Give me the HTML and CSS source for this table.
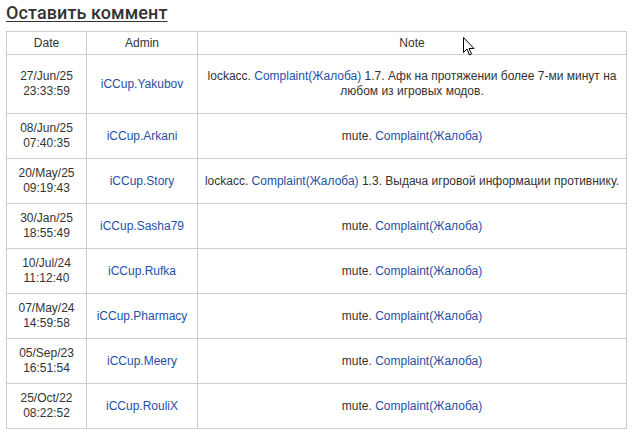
FILE: index.html
```html
<!DOCTYPE html>
<html>
<head>
<meta charset="utf-8">
<link rel="stylesheet" href="styles.css">
</head>
<body>
<a class="title" href="#">Оставить коммент</a>
<table class="log">
  <colgroup><col class="c-date"><col class="c-admin"><col></colgroup>
  <thead>
    <tr><th>Date</th><th>Admin</th><th>Note</th></tr>
  </thead>
  <tbody>
    <tr class="tall"><td>27/Jun/25<br>23:33:59</td><td><a href="#">iCCup.Yakubov</a></td><td>lockacc. <a href="#">Complaint(Жалоба)</a> 1.7. Афк на протяжении более 7-ми минут на любом из игровых модов.</td></tr>
    <tr><td>08/Jun/25<br>07:40:35</td><td><a href="#">iCCup.Arkani</a></td><td>mute. <a href="#">Complaint(Жалоба)</a></td></tr>
    <tr><td>20/May/25<br>09:19:43</td><td><a href="#">iCCup.Story</a></td><td>lockacc. <a href="#">Complaint(Жалоба)</a> 1.3. Выдача игровой информации противнику.</td></tr>
    <tr><td>30/Jan/25<br>18:55:49</td><td><a href="#">iCCup.Sasha79</a></td><td>mute. <a href="#">Complaint(Жалоба)</a></td></tr>
    <tr><td>10/Jul/24<br>11:12:40</td><td><a href="#">iCCup.Rufka</a></td><td>mute. <a href="#">Complaint(Жалоба)</a></td></tr>
    <tr><td>07/May/24<br>14:59:58</td><td><a href="#">iCCup.Pharmacy</a></td><td>mute. <a href="#">Complaint(Жалоба)</a></td></tr>
    <tr><td>05/Sep/23<br>16:51:54</td><td><a href="#">iCCup.Meery</a></td><td>mute. <a href="#">Complaint(Жалоба)</a></td></tr>
    <tr><td>25/Oct/22<br>08:22:52</td><td><a href="#">iCCup.RouliX</a></td><td>mute. <a href="#">Complaint(Жалоба)</a></td></tr>
  </tbody>
</table>
<svg class="cursor" width="12" height="19" viewBox="0 0 12 19"><path d="M0.5 0.5 L0.5 15.5 L4 12 L6.5 18 L8.5 17 L6 11.5 L11 11.5 Z" fill="#fff" stroke="#000" stroke-width="1"/></svg>
</body>
</html>
```
FILE: styles.css
```css
body {
  margin: 0;
  padding: 3px 6px;
  background: #fff;
  font-family: "Liberation Sans", Arial, sans-serif;
  font-size: 12px;
  color: #333;
  position: relative;
}
.title {
  display: inline-block;
  font-family: Roboto, "Noto Sans", sans-serif;
  font-size: 18px;
  font-weight: 500;
  letter-spacing: 0.1px;
  color: #333;
  text-decoration: underline;
  text-underline-offset: 2px;
  line-height: 20px;
  margin-bottom: 8px;
}
.log {
  border-collapse: collapse;
  width: 621px;
  table-layout: fixed;
}
.c-date { width: 80px; }
.c-admin { width: 111px; }
.log th, .log td {
  border: 1px solid #ccc;
  text-align: center;
  vertical-align: middle;
  line-height: 15px;
}
.log th {
  font-weight: normal;
  height: 22px;
  padding: 0 4px;
}
.log td {
  height: 44px;
  padding: 0 2px;
}
.log tr.tall td { height: 58px; }
.log a, .log a:visited {
  color: #1f4fa6;
  text-decoration: none;
}
.cursor {
  position: absolute;
  left: 463px;
  top: 37px;
}
```
